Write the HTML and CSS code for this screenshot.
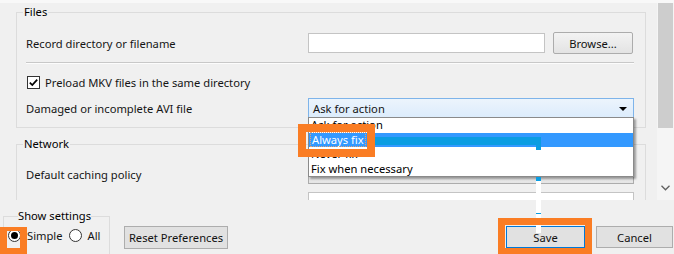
FILE: index.html
```html
<!DOCTYPE html>
<html lang="en">
<head>
  <meta charset="UTF-8">
  <title>Preferences - Input / Codecs</title>
  <link rel="stylesheet" href="styles.css">
</head>
<body>
  <div class="dialog">
    <div class="top-strip"></div>
    <div class="scroll-area">
      <div class="pane">
        <fieldset class="group files">
          <legend>Files</legend>
          <div class="group-body">
            <div class="row first">
              <span class="label">Record directory or filename</span>
              <div class="field-pair">
                <div class="input"></div>
                <button class="btn browse">Browse...</button>
              </div>
            </div>
            <div class="separator"></div>
            <div class="check-row">
              <span class="checkbox">
                <svg viewBox="0 0 13 13" width="13" height="13">
                  <path d="M2.8 6.6 L5.3 9.1 L10.2 3.6" fill="none" stroke="#000" stroke-width="1.7"/>
                </svg>
              </span>
              Preload MKV files in the same directory
            </div>
            <div class="row avi">
              <span class="label">Damaged or incomplete AVI file</span>
              <div class="combo open">
                <span>Ask for action</span>
                <span class="arrow"></span>
                <ul class="dropdown">
                  <li>Ask for action</li>
                  <li class="active"><span class="focus">Always fix</span></li>
                  <li>Never fix</li>
                  <li>Fix when necessary</li>
                </ul>
              </div>
            </div>
          </div>
        </fieldset>
        <fieldset class="group network">
          <legend>Network</legend>
          <div class="group-body">
            <div class="row caching">
              <span class="label">Default caching policy</span>
              <div class="combo plain"><span class="arrow"></span></div>
            </div>
            <div class="row next">
              <span class="label"></span>
              <div class="input wide"></div>
            </div>
          </div>
        </fieldset>
      </div>
      <div class="scrollbar">
        <div class="thumb"></div>
        <svg class="chevron" viewBox="0 0 9 6" width="9" height="6">
          <path d="M0.5 0.8 L4.5 4.8 L8.5 0.8" fill="none" stroke="#606060" stroke-width="1.3"/>
        </svg>
      </div>
    </div>
    <div class="bottom-bar">
      <fieldset class="group show-settings">
        <legend>Show settings</legend>
        <div class="radios">
          <span class="radio checked"></span><span class="radio-label">Simple</span>
          <span class="radio"></span><span class="radio-label">All</span>
        </div>
      </fieldset>
      <button class="btn reset">Reset Preferences</button>
      <div class="actions">
        <button class="btn save">Save</button>
        <button class="btn cancel">Cancel</button>
      </div>
    </div>

    <!-- annotation marks drawn over the screenshot -->
    <div class="mark-bar"></div>
    <div class="mark-line"></div>
    <div class="highlight-box fix-box"></div>
    <div class="highlight-box save-box"></div>
    <div class="highlight-box radio-box"></div>
  </div>
</body>
</html>
```

FILE: styles.css
```css
* { box-sizing: border-box; }
body {
  margin: 0;
  background-color: #f0f0f0;
  font-family: 'Noto Sans', 'Open Sans', sans-serif;
  font-size: 11.2px;
  color: #151515;
}
.dialog {
  position: relative;
  width: 674px;
  height: 254px;
  overflow: hidden;
}
.top-strip {
  height: 3px;
  background-color: #f8f8f8;
}
.scroll-area {
  height: 197px;
  display: flex;
  overflow: hidden;
}
.pane {
  width: 657px;
}
.group {
  margin: 0;
  padding: 0;
  border: 1px solid #dcdcdc;
  min-width: 0;
}
.group legend {
  padding: 0 1px;
  margin-left: 6px;
  line-height: 14px;
  color: #000;
}
.files {
  margin: 2px 0 0 16px;
  width: 630px;
}
.network {
  margin: 9px 0 0 16px;
  width: 630px;
  height: 80px;
}
.group-body {
  padding: 0 11px 9px 9px;
}
.row {
  display: grid;
  grid-template-columns: 282px 1fr;
  align-items: center;
}
.row.first {
  margin-top: 13px;
  height: 22px;
}
.row.avi {
  margin-top: 9px;
  height: 20px;
}
.row.caching {
  margin-top: 13px;
  height: 20px;
}
.row.next {
  margin-top: 8px;
  height: 20px;
}
.field-pair {
  display: flex;
  align-items: center;
  gap: 8px;
}
.input {
  width: 237px;
  height: 20px;
  background-color: #fff;
  border: 1px solid #c4c4c4;
}
.input.wide {
  width: 326px;
}
.btn {
  font-family: inherit;
  font-size: 11.2px;
  color: #111;
  background-color: #e1e1e1;
  border: 1px solid #adadad;
  padding: 0;
  height: 22px;
}
.browse {
  width: 80px;
  background: linear-gradient(#f3f3f3, #e3e3e3);
  border-color: #acacac;
  border-radius: 2px;
}
.separator {
  margin-top: 8px;
  border-top: 1px solid #c8c8c8;
  border-bottom: 1px solid #fcfcfc;
}
.check-row {
  margin-top: 12px;
  height: 13px;
  display: flex;
  align-items: center;
  gap: 5px;
  padding-left: 1px;
}
.checkbox {
  width: 13px;
  height: 13px;
  border: 1px solid #333;
  background-color: #fff;
  display: flex;
}
.checkbox svg {
  margin: -1px;
}
.combo {
  position: relative;
  height: 20px;
  display: flex;
  align-items: center;
  padding-left: 4px;
  border: 1px solid #7eb4ea;
  background: linear-gradient(#ecf4fc, #dcecfc);
}
.combo.plain {
  border-color: #acacac;
  background: linear-gradient(#f0f0f0, #e5e5e5);
}
.arrow {
  position: absolute;
  right: 6px;
  top: 8px;
  border-left: 4px solid transparent;
  border-right: 4px solid transparent;
  border-top: 4px solid #000;
}
.dropdown {
  position: absolute;
  top: 100%;
  left: -1px;
  width: 326px;
  margin: 0;
  padding: 0;
  list-style: none;
  background-color: #fff;
  border: 1px solid #8a8a8a;
  box-shadow: 2px 2px 2px rgba(0, 0, 0, 0.35);
  z-index: 2;
}
.dropdown li {
  height: 14.5px;
  line-height: 14.5px;
  padding-left: 2px;
  color: #000;
}
.dropdown li.active {
  background-color: #3399ff;
  color: #fff;
}
.focus {
  display: inline-block;
  line-height: 13px;
  padding: 0 1px;
  outline: 1px dotted #e9a070;
  outline-offset: 0;
}
.scrollbar {
  position: relative;
  width: 17px;
  background-color: #f5f5f5;
}
.thumb {
  height: 125px;
  margin-left: 1px;
  width: 15px;
  background-color: #cdcdcd;
}
.chevron {
  position: absolute;
  left: 4px;
  top: 182px;
}
.bottom-bar {
  height: 54px;
  display: flex;
  align-items: flex-start;
  overflow: hidden;
}
.show-settings {
  margin: 9px 0 0 3px;
  width: 107px;
  height: 60px;
}
.show-settings legend {
  margin-left: 14px;
  padding: 0;
}
.radios {
  display: flex;
  align-items: center;
  margin-top: 6px;
  padding-left: 4px;
  height: 13px;
}
.radio {
  width: 13px;
  height: 13px;
  border: 1px solid #333;
  border-radius: 50%;
  background-color: #fff;
  display: flex;
  align-items: center;
  justify-content: center;
}
.radio.checked::after {
  content: "";
  width: 7px;
  height: 7px;
  border-radius: 50%;
  background-color: #000;
}
.radio-label {
  margin: 0 6px 0 6px;
}
.reset {
  margin: 26px 0 0 14px;
  width: 104px;
  height: 23px;
}
.actions {
  display: flex;
  gap: 11px;
  margin: 26px 1px 0 auto;
}
.save {
  width: 79px;
  border-color: #0078d7;
}
.cancel {
  width: 77px;
}

/* orange annotation boxes */
.highlight-box {
  position: absolute;
  border: 8px solid #fa7d24;
  z-index: 5;
}
.fix-box {
  left: 298px;
  top: 124px;
  width: 77px;
  height: 33px;
}
.save-box {
  left: 498px;
  top: 218px;
  width: 94px;
  height: 37px;
  border-width: 7px;
}
.radio-box {
  left: 0;
  top: 227px;
  width: 27px;
  height: 27px;
  border-width: 4px 7px 6px 7px;
}
.mark-bar {
  position: absolute;
  left: 372px;
  top: 137px;
  width: 169px;
  height: 8px;
  background-color: #0a9de2;
  z-index: 3;
}
.mark-line {
  position: absolute;
  left: 536px;
  top: 145px;
  width: 5px;
  height: 88px;
  background: linear-gradient(#0a9de2 0, #0a9de2 5px, transparent 5px, transparent 32px, #0a9de2 32px, #0a9de2 36px, #fff 36px, #fff 68px, #0a9de2 68px, #0a9de2 69px, #fff 69px);
  z-index: 3;
}
```
